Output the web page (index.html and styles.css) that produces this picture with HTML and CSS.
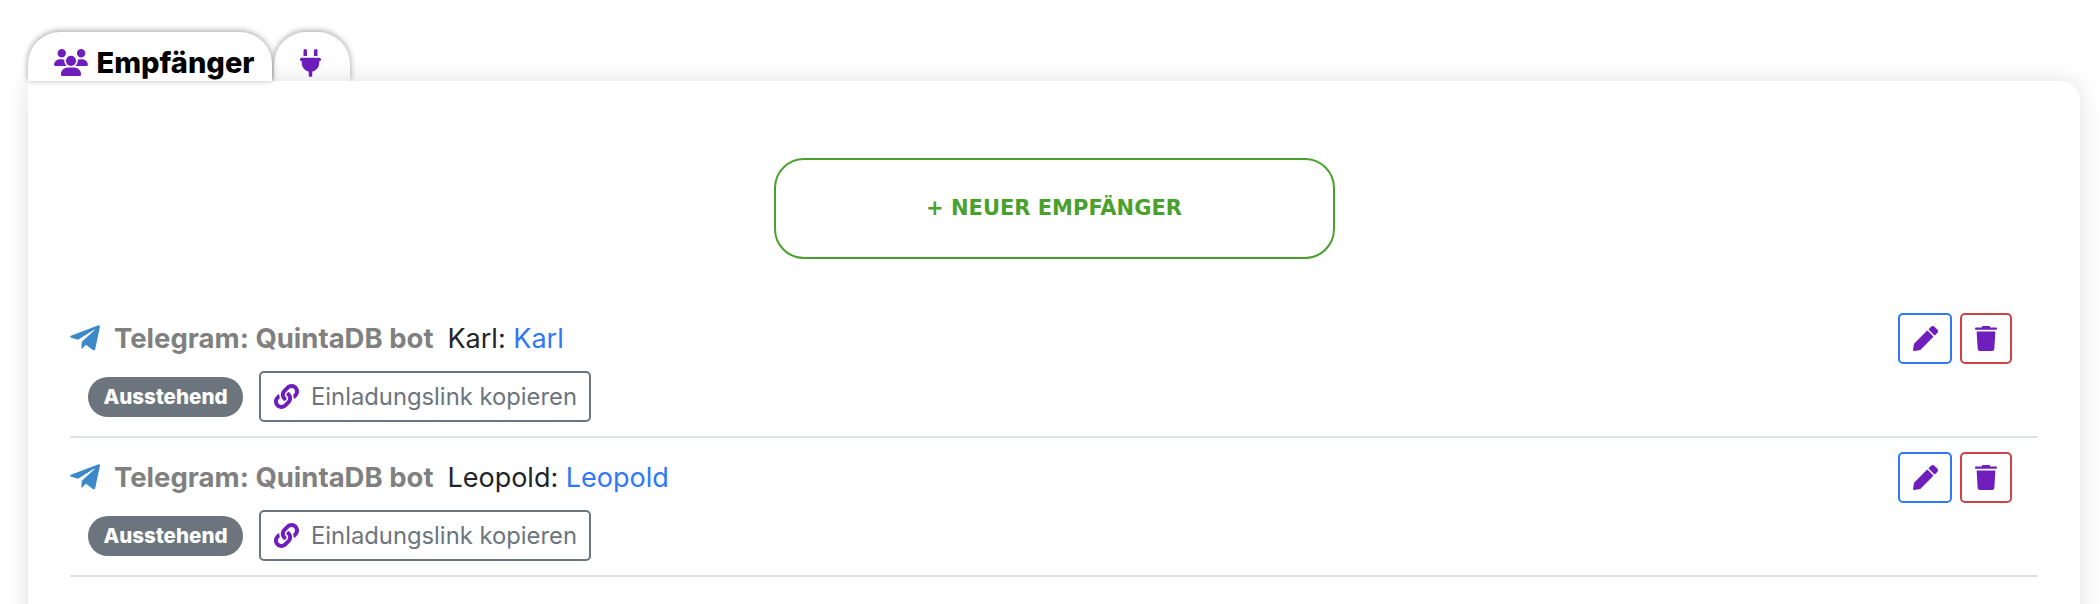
FILE: index.html
```html
<!DOCTYPE html>
<html>
<head>
    <meta charset="utf-8">
    <title>Empfänger</title>
    <link rel="stylesheet" href="styles.css">
</head>
<body>
    <div class="page">
        <div class="tabs">
            <div class="tab tab-active">
                <svg class="icon icon-users" viewBox="0 0 640 512"><path d="M144 0a80 80 0 1 1 0 160A80 80 0 1 1 144 0zM512 0a80 80 0 1 1 0 160A80 80 0 1 1 512 0zM0 298.7C0 239.8 47.8 192 106.7 192h42.7c15.9 0 31 3.5 44.6 9.7c-1.3 7.2-1.9 14.7-1.9 22.3c0 38.2 16.8 72.5 43.3 96c-.2 0-.4 0-.7 0H21.3C9.6 320 0 310.4 0 298.7zM405.3 320c-.2 0-.4 0-.7 0c26.6-23.5 43.3-57.8 43.3-96c0-7.6-.7-15-1.9-22.3c13.6-6.3 28.7-9.7 44.6-9.7h42.7C592.2 192 640 239.8 640 298.7c0 11.8-9.6 21.3-21.3 21.3H405.3zM224 224a96 96 0 1 1 192 0 96 96 0 1 1 -192 0zM128 485.3C128 411.7 187.7 352 261.3 352H378.7C452.3 352 512 411.7 512 485.3c0 14.7-11.9 26.7-26.7 26.7H154.7c-14.7 0-26.7-11.9-26.7-26.7z"/></svg>
                <span>Empfänger</span>
            </div>
            <div class="tab tab-plug">
                <svg class="icon icon-plug" viewBox="0 0 384 512"><path d="M96 0C78.3 0 64 14.3 64 32v96h64V32c0-17.7-14.3-32-32-32zM288 0c-17.7 0-32 14.3-32 32v96h64V32c0-17.7-14.3-32-32-32zM32 160c-17.7 0-32 14.3-32 32s14.3 32 32 32v32c0 77.4 55 142 128 156.8V480c0 17.7 14.3 32 32 32s32-14.3 32-32V412.8C297 398 352 333.4 352 256V224c17.7 0 32-14.3 32-32s-14.3-32-32-32H32z"/></svg>
            </div>
        </div>
        <div class="card">
            <div class="add-wrap">
                <button class="add-btn">+ NEUER EMPFÄNGER</button>
            </div>

            <div class="row">
                <div class="row-main">
                    <div class="row-title">
                        <svg class="icon icon-telegram" viewBox="0 0 448 512"><path d="M446.7 98.6l-67.6 318.8c-5.1 22.5-18.4 28.1-37.3 17.5l-103-75.9-49.7 47.8c-5.5 5.5-10.1 10.1-20.7 10.1l7.4-104.9 190.9-172.5c8.3-7.4-1.8-11.5-12.9-4.1L117.8 284 16.2 252.2c-22.1-6.9-22.5-22.1 4.6-32.7L418.2 66.4c18.4-6.9 34.5 4.1 28.5 32.2z"/></svg>
                        <span class="service">Telegram: QuintaDB bot</span>
                        <span class="name">Karl: <a class="name-link">Karl</a></span>
                    </div>
                    <div class="row-sub">
                        <span class="pill">Ausstehend</span>
                        <button class="invite-btn">
                            <svg class="icon icon-link" viewBox="0 0 512 512"><path d="M326.612 185.391c59.747 59.809 58.927 155.698.36 214.59-.11.12-.24.25-.36.37l-67.2 67.2c-59.27 59.27-155.699 59.262-214.96 0-59.27-59.26-59.27-155.7 0-214.96l37.106-37.106c9.84-9.84 26.786-3.3 27.294 10.606.648 17.722 3.826 35.527 9.69 52.721 1.986 5.822.567 12.262-3.783 16.612l-13.087 13.087c-28.026 28.026-28.905 73.66-1.155 101.96 28.024 28.579 74.086 28.749 102.325.51l67.2-67.19c28.191-28.191 28.073-73.757 0-101.83-3.701-3.694-7.429-6.564-10.341-8.569a16.037 16.037 0 0 1-6.947-12.606c-.396-10.567 3.348-21.456 11.698-29.806l21.054-21.055c5.521-5.521 14.182-6.199 20.584-1.731a152.482 152.482 0 0 1 20.522 17.197zM467.547 44.449c-59.261-59.262-155.69-59.27-214.96 0l-67.2 67.2c-.12.12-.25.25-.36.37-58.566 58.892-59.387 154.781.36 214.59a152.454 152.454 0 0 0 20.521 17.196c6.402 4.468 15.064 3.789 20.584-1.731l21.054-21.055c8.35-8.35 12.094-19.239 11.698-29.806a16.037 16.037 0 0 0-6.947-12.606c-2.912-2.005-6.64-4.875-10.341-8.569-28.073-28.073-28.191-73.639 0-101.83l67.2-67.19c28.239-28.239 74.3-28.069 102.325.51 27.75 28.3 26.872 73.934-1.155 101.96l-13.087 13.087c-4.35 4.35-5.769 10.79-3.783 16.612 5.864 17.194 9.042 34.999 9.69 52.721.509 13.906 17.454 20.446 27.294 10.606l37.106-37.106c59.271-59.259 59.271-155.699.001-214.959z"/></svg>
                            Einladungslink kopieren
                        </button>
                    </div>
                </div>
                <div class="row-actions">
                    <button class="icon-btn icon-btn-edit"><svg class="icon icon-pen" viewBox="0 0 512 512"><path d="M497.9 142.1l-46.1 46.1c-4.7 4.7-12.3 4.7-17 0l-111-111c-4.7-4.7-4.7-12.3 0-17l46.1-46.1c18.7-18.7 49.1-18.7 67.9 0l60.1 60.1c18.8 18.7 18.8 49.1 0 67.9zM284.2 99.8L21.6 362.4.4 483.9c-2.9 16.4 11.4 30.6 27.8 27.8l121.5-21.3 262.6-262.6c4.7-4.7 4.7-12.3 0-17l-111-111c-4.8-4.7-12.4-4.7-17.1 0z"/></svg></button>
                    <button class="icon-btn icon-btn-delete"><svg class="icon icon-trash" viewBox="0 0 448 512"><path d="M150 0h148l14 32h120a16 16 0 0 1 16 16v12a16 16 0 0 1-16 16H16A16 16 0 0 1 0 60V48a16 16 0 0 1 16-16h120zM53.2 467a48 48 0 0 0 47.9 45h245.8a48 48 0 0 0 47.9-45L416 112H32z"/></svg></button>
                </div>
            </div>

            <div class="row">
                <div class="row-main">
                    <div class="row-title">
                        <svg class="icon icon-telegram" viewBox="0 0 448 512"><path d="M446.7 98.6l-67.6 318.8c-5.1 22.5-18.4 28.1-37.3 17.5l-103-75.9-49.7 47.8c-5.5 5.5-10.1 10.1-20.7 10.1l7.4-104.9 190.9-172.5c8.3-7.4-1.8-11.5-12.9-4.1L117.8 284 16.2 252.2c-22.1-6.9-22.5-22.1 4.6-32.7L418.2 66.4c18.4-6.9 34.5 4.1 28.5 32.2z"/></svg>
                        <span class="service">Telegram: QuintaDB bot</span>
                        <span class="name">Leopold: <a class="name-link">Leopold</a></span>
                    </div>
                    <div class="row-sub">
                        <span class="pill">Ausstehend</span>
                        <button class="invite-btn">
                            <svg class="icon icon-link" viewBox="0 0 512 512"><path d="M326.612 185.391c59.747 59.809 58.927 155.698.36 214.59-.11.12-.24.25-.36.37l-67.2 67.2c-59.27 59.27-155.699 59.262-214.96 0-59.27-59.26-59.27-155.7 0-214.96l37.106-37.106c9.84-9.84 26.786-3.3 27.294 10.606.648 17.722 3.826 35.527 9.69 52.721 1.986 5.822.567 12.262-3.783 16.612l-13.087 13.087c-28.026 28.026-28.905 73.66-1.155 101.96 28.024 28.579 74.086 28.749 102.325.51l67.2-67.19c28.191-28.191 28.073-73.757 0-101.83-3.701-3.694-7.429-6.564-10.341-8.569a16.037 16.037 0 0 1-6.947-12.606c-.396-10.567 3.348-21.456 11.698-29.806l21.054-21.055c5.521-5.521 14.182-6.199 20.584-1.731a152.482 152.482 0 0 1 20.522 17.197zM467.547 44.449c-59.261-59.262-155.69-59.27-214.96 0l-67.2 67.2c-.12.12-.25.25-.36.37-58.566 58.892-59.387 154.781.36 214.59a152.454 152.454 0 0 0 20.521 17.196c6.402 4.468 15.064 3.789 20.584-1.731l21.054-21.055c8.35-8.35 12.094-19.239 11.698-29.806a16.037 16.037 0 0 0-6.947-12.606c-2.912-2.005-6.64-4.875-10.341-8.569-28.073-28.073-28.191-73.639 0-101.83l67.2-67.19c28.239-28.239 74.3-28.069 102.325.51 27.75 28.3 26.872 73.934-1.155 101.96l-13.087 13.087c-4.35 4.35-5.769 10.79-3.783 16.612 5.864 17.194 9.042 34.999 9.69 52.721.509 13.906 17.454 20.446 27.294 10.606l37.106-37.106c59.271-59.259 59.271-155.699.001-214.959z"/></svg>
                            Einladungslink kopieren
                        </button>
                    </div>
                </div>
                <div class="row-actions">
                    <button class="icon-btn icon-btn-edit"><svg class="icon icon-pen" viewBox="0 0 512 512"><path d="M497.9 142.1l-46.1 46.1c-4.7 4.7-12.3 4.7-17 0l-111-111c-4.7-4.7-4.7-12.3 0-17l46.1-46.1c18.7-18.7 49.1-18.7 67.9 0l60.1 60.1c18.8 18.7 18.8 49.1 0 67.9zM284.2 99.8L21.6 362.4.4 483.9c-2.9 16.4 11.4 30.6 27.8 27.8l121.5-21.3 262.6-262.6c4.7-4.7 4.7-12.3 0-17l-111-111c-4.8-4.7-12.4-4.7-17.1 0z"/></svg></button>
                    <button class="icon-btn icon-btn-delete"><svg class="icon icon-trash" viewBox="0 0 448 512"><path d="M150 0h148l14 32h120a16 16 0 0 1 16 16v12a16 16 0 0 1-16 16H16A16 16 0 0 1 0 60V48a16 16 0 0 1 16-16h120zM53.2 467a48 48 0 0 0 47.9 45h245.8a48 48 0 0 0 47.9-45L416 112H32z"/></svg></button>
                </div>
            </div>
        </div>
    </div>
</body>
</html>
```

FILE: styles.css
```css
html, body {
    margin: 0;
    height: 604px;
    overflow: hidden;
    background: #fff;
    font-family: Inter, "Liberation Sans", sans-serif;
    color: #212529;
}
.page {
    padding: 32px 20px 0 28px;
}
.icon {
    display: block;
    fill: #6f1ebd;
    flex: none;
}

/* tabs */
.tabs {
    display: flex;
    gap: 2px;
    height: 49px;
}
.tab {
    display: flex;
    align-items: center;
    justify-content: center;
    box-sizing: border-box;
    background: #fff;
    border-radius: 32px 32px 0 0;
    box-shadow: 0 -1px 6px rgba(0,0,0,0.38);
    padding-top: 12px;
}
.tab-active {
    width: 244px;
    gap: 9px;
    padding-left: 8px;
    position: relative;
    z-index: 2;
    font-weight: 800;
    font-size: 29px;
    color: #000;
}
.tab-plug {
    width: 76px;
    padding-right: 4px;
}
.icon-users { width: 34px; height: 27px; }
.icon-plug { width: 21px; height: 28px; }

/* card */
.card {
    position: relative;
    z-index: 1;
    background: #fff;
    border-radius: 0 20px 20px 20px;
    box-shadow: 0 0 24px rgba(0,0,0,0.12);
    padding: 77px 42px 80px;
}
.add-wrap {
    display: flex;
    justify-content: center;
    margin-bottom: 40px;
}
.add-btn {
    width: 561px;
    height: 101px;
    background: #fff;
    border: 2px solid #4aa02c;
    border-radius: 30px;
    color: #4aa02c;
    font-family: "DejaVu Sans", sans-serif;
    font-weight: 700;
    font-size: 21px;
    padding: 0 0 2px;
}

/* rows */
.row {
    display: flex;
    justify-content: space-between;
    height: 139px;
    box-sizing: border-box;
    border-bottom: 2px solid #dee2e6;
    padding: 14px 26px 0 0;
}
.row-title {
    display: flex;
    align-items: center;
    height: 50px;
    font-size: 27px;
}
.icon-telegram {
    width: 30px;
    height: 34px;
    fill: #3d88c9;
    margin-right: 14px;
}
.service {
    font-weight: 700;
    font-size: 27.5px;
    color: #808080;
    margin-right: 14px;
}
.name-link {
    color: #2f78f6;
}
.row-sub {
    display: flex;
    align-items: center;
    gap: 16px;
    margin: 8px 0 0 18px;
}
.pill {
    display: flex;
    align-items: center;
    justify-content: center;
    width: 155px;
    height: 40px;
    background: #6c757d;
    color: #fff;
    border-radius: 20px;
    font-weight: 800;
    font-size: 20.6px;
}
.invite-btn {
    display: flex;
    align-items: center;
    gap: 12px;
    height: 51px;
    width: 332px;
    padding: 0 13px;
    background: #fff;
    border: 2px solid #6c757d;
    border-radius: 5px;
    color: #6c757d;
    font-family: Inter, sans-serif;
    font-size: 23.8px;
    white-space: nowrap;
}
.icon-link { width: 25px; height: 25px; }
.row-actions {
    display: flex;
    gap: 8px;
}
.icon-btn {
    display: flex;
    align-items: center;
    justify-content: center;
    height: 51px;
    padding: 0;
    background: #fff;
    border-radius: 5px;
}
.icon-btn-edit {
    width: 54px;
    border: 2px solid #2f78f6;
}
.icon-btn-delete {
    width: 52px;
    border: 2px solid #cb444a;
}
.icon-pen { width: 25px; height: 25px; }
.icon-trash { width: 22px; height: 25px; }
```
